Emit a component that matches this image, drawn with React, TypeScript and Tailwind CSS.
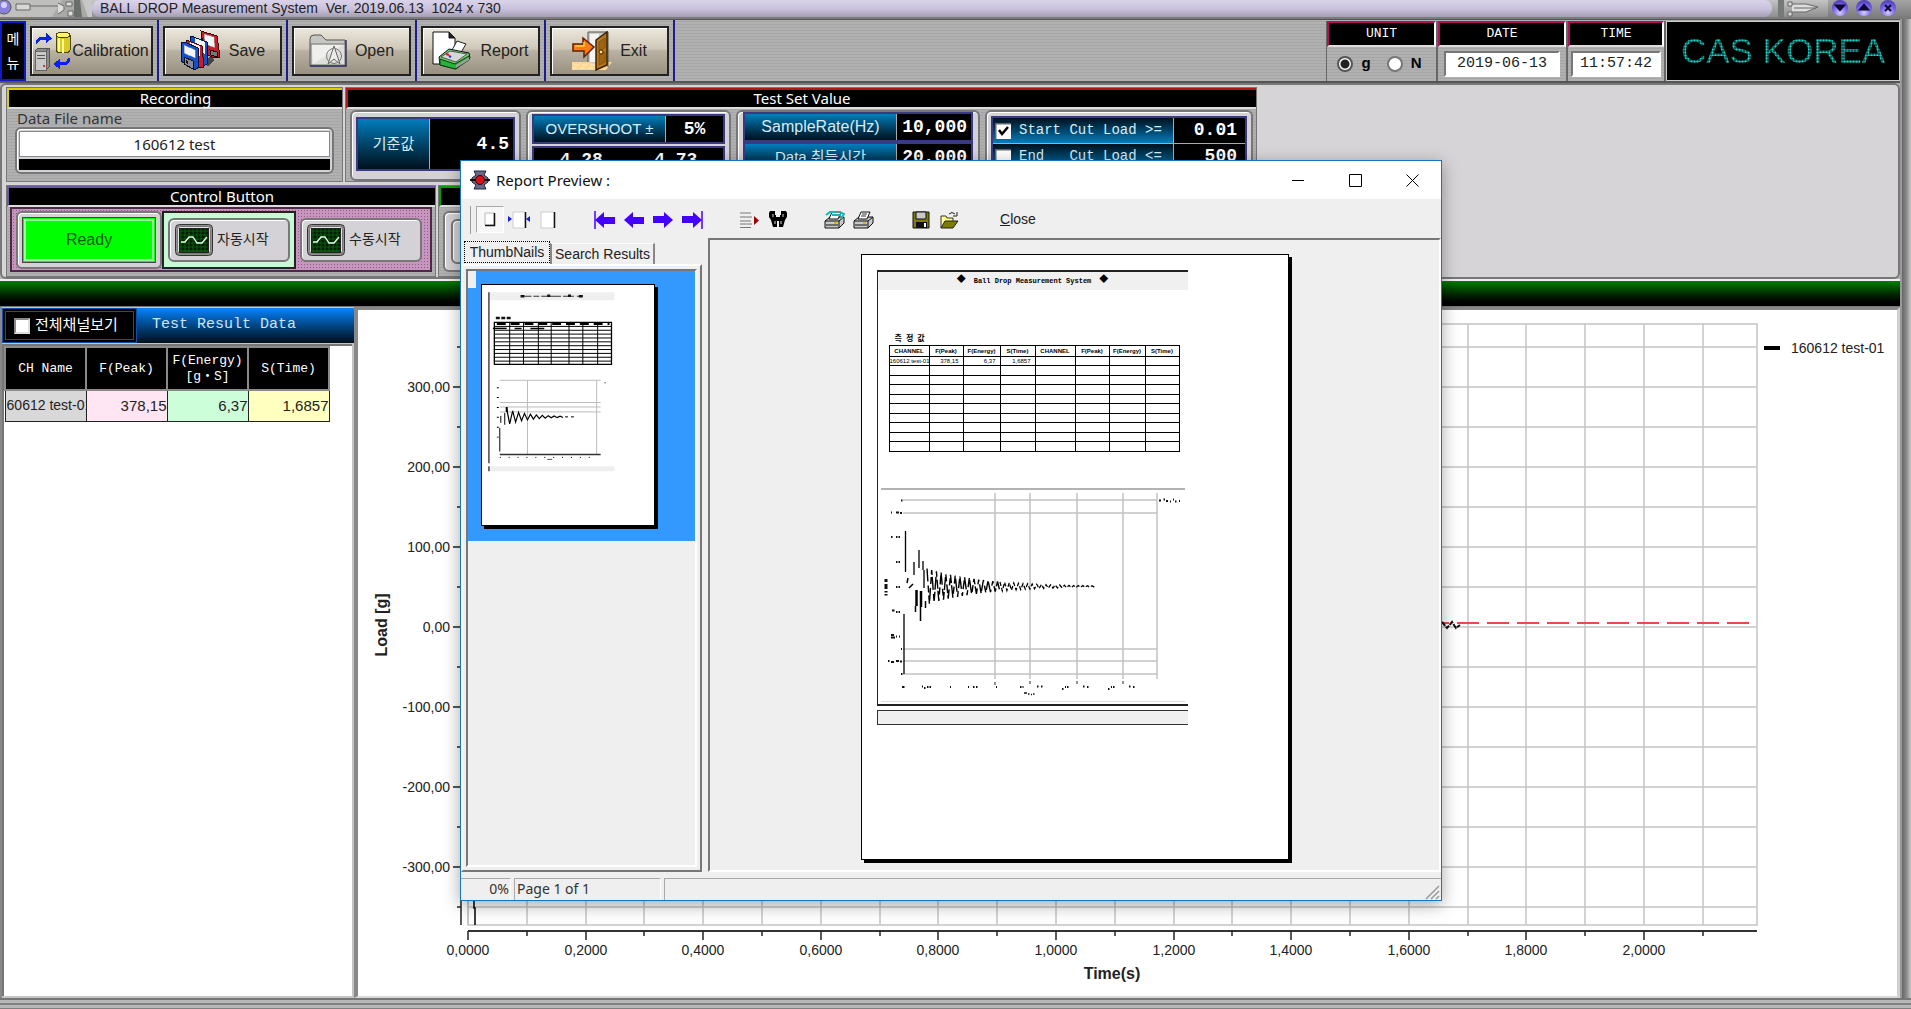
import React from 'react';

const SANS = "font-['Liberation_Sans','Noto_Sans_CJK_KR',sans-serif]";
const HUMAN = "font-['Noto_Sans','Noto_Sans_CJK_KR',sans-serif]";
const MONO = "font-['Liberation_Mono','Noto_Sans_CJK_KR',monospace]";
const BRUSHED = 'bg-[repeating-linear-gradient(0deg,#b0b0b0_0px,#b0b0b0_2px,#a6a6a6_2px,#a6a6a6_3px)]';
const BLUE = 'bg-linear-to-b from-[#007fbe] to-[#00121f]';

/* ---------- toolbar icons ---------- */

function CalibrationIcon() {
  return (
    <svg width="38" height="40" viewBox="0 0 38 40" shapeRendering="crispEdges" className="shrink-0">
      <path d="M2 13V10L5 6H12V2L18 7.500L12 12V9H6L3 13Z" fill="#0a22f0" />
      <path d="M36 27V31L32 34H26V38L19 33L26 28V31H32L34 27Z" fill="#0a22f0" />
      <path d="M22 4V19C22 23 36 23 36 19V4Z" fill="#d8cc20" stroke="#4c4800" />
      <path d="M25 7V21M29 8V22" stroke="#fff89a" strokeWidth="2" />
      <ellipse cx="29" cy="4" rx="7" ry="3" fill="#fff66a" stroke="#4c4800" />
      <path d="M1 20L4 17H15V36L12 39H1Z" fill="#8c8c8c" stroke="#555" />
      <path d="M1 20H12V39H1Z" fill="#c9c9c9" stroke="#666" />
      <path d="M12 20L15 17" stroke="#555" />
      <path d="M3 24H11M3 27H11" stroke="#555" />
      <path d="M9 35H11" stroke="#e03030" strokeWidth="2" />
    </svg>
  );
}

function SaveIcon() {
  return (
    <svg width="41" height="41" viewBox="0 0 41 41" shapeRendering="crispEdges">
      <path d="M28 36L34 30L30 26L24 33Z" fill="#444" />
      <path d="M21 1L37 6L40 27L34 28L24 23Z" fill="#c81e28" stroke="#400" />
      <path d="M24 4L34 7L35 18L25 14Z" fill="#f4f4f4" stroke="#888" strokeWidth=".6" />
      <path d="M30 20L37 22V27L31 25Z" fill="#777" stroke="#111" />
      <path d="M11 6L27 12V34L23 36L10 26Z" fill="#1450c8" stroke="#001040" />
      <path d="M15 8L25 12V24L15 18Z" fill="#f4f4f4" />
      <path d="M6 10L22 16L24 37L19 38L6 28Z" fill="#c81e28" stroke="#400" />
      <path d="M10 12L20 16V26L9 21Z" fill="#f4f4f4" />
      <path d="M1 13L5 12L18 18L19 37L15 40L1 31Z" fill="#1450c8" stroke="#001040" />
      <path d="M4 15L15 20V28L4 23Z" fill="#f4f4f4" stroke="#99a" strokeWidth=".6" />
      <path d="M4 27L13 31V39L4 34Z" fill="#889" stroke="#111" />
      <path d="M6 30L8 31V34L6 33Z" fill="#111" />
    </svg>
  );
}

function OpenIcon() {
  return (
    <svg width="38" height="33" viewBox="0 0 38 33">
      <path d="M1 31V5Q1 1 5 1H12L17 6H36V32H1Z" fill="#c6c6c2" stroke="#555" />
      <path d="M2 10H36V31H2Z" fill="#dededb" stroke="#77776f" />
      <path d="M3 11H34L4 30Z" fill="#f3f3f1" opacity=".8" />
      <path d="M1 32H37V6" stroke="#333366" strokeWidth="1.500" fill="none" />
      <circle cx="25" cy="22" r="7.500" fill="none" stroke="#777" />
      <path d="M25 12L31 30L25 25L19 30Z" fill="#ecece8" stroke="#666" />
    </svg>
  );
}

function ReportIcon() {
  return (
    <svg width="40" height="40" viewBox="0 0 40 40">
      <path d="M1 1H17L23 7V33H1Z" fill="#fff" stroke="#111" />
      <path d="M17 1V7H23Z" fill="#222" stroke="#111" />
      <path d="M20 19L25 10L34 13L28 23Z" fill="#fff" stroke="#222" />
      <path d="M7 26L17 18L37 22L38 27L24 38L8 34Z" fill="#6fd06f" stroke="#111" />
      <path d="M9 26L18 20L35 23L24 31Z" fill="#d6d8d6" stroke="#555" />
      <path d="M8 28L23 33L37 25V29L23 38L8 34Z" fill="#27b23a" stroke="#0c3c10" />
      <path d="M24 34L37 26V29L24 37Z" fill="#9aa09a" />
      <path d="M14 23L17 24" stroke="#d02020" strokeWidth="2" />
      <path d="M17 25L19 26" stroke="#2030d0" strokeWidth="2" />
    </svg>
  );
}

function ExitIcon() {
  return (
    <svg width="40" height="40" viewBox="0 0 40 40">
      <path d="M0 31H40L34 39H0Z" fill="#ffd691" />
      <path d="M2 34H34M0 37H28" stroke="#f4f0d8" strokeDasharray="5 3" />
      <path d="M16 31V1H36V36" fill="#cdc9c4" stroke="#555" />
      <path d="M18 31V3H27V31Z" fill="#f6f4f2" />
      <path d="M24 9L35 1V34L24 39Z" fill="#b5761c" stroke="#3a2200" strokeWidth="1.500" />
      <path d="M27 11L33 7V17L27 20ZM27 24L33 21V31L27 34Z" fill="#a0640f" stroke="#7c4c08" strokeWidth=".7" />
      <circle cx="29" cy="21" r="2" fill="#ffe28a" stroke="#3a2200" />
      <path d="M1 13H11V7L22 16L12 26V20H1Z" fill="#ff7a12" stroke="#5a2200" strokeWidth="1.500" />
      <path d="M3 15H12V11" stroke="#ffd24a" strokeWidth="1.500" fill="none" />
    </svg>
  );
}

function ScopeIcon() {
  const lines = [4, 8, 12, 16, 20, 24, 28];
  return (
    <svg width="38" height="32" viewBox="0 0 38 32">
      <rect x=".5" y=".5" width="37" height="31" rx="4" fill="#8f8f8f" stroke="#333" />
      <rect x="2.500" y="2.500" width="33" height="27" rx="3" fill="#e4e4e4" stroke="#777" />
      <rect x="4.500" y="4.500" width="29" height="24" fill="#011d01" stroke="#222" />
      {lines.map((v) => (
        <path key={v} d={`M${v + 2} 5V28M5 ${Math.min(v + 3, 27)}H33`} stroke="#0b6b12" strokeWidth=".8" />
      ))}
      <path d="M6 18H10L14 13H18L22 19H27L32 13" fill="none" stroke="#e8ffe8" strokeWidth="1.300" />
    </svg>
  );
}

/* ---------- frame ---------- */

function TitleBar() {
  return (
    <header className="flex h-[19px] items-stretch border-b-2 border-[#7b7b7b] bg-linear-to-b from-[#c4c4c4] to-[#8e8e8e]">
      <svg width="92" height="17" viewBox="0 0 92 17">
        <rect width="92" height="17" fill="#a9aaa8" />
        <path d="M0 0H62L52 17H0Z" fill="#bfc0be" />
        <circle cx="4" cy="7" r="7" fill="#8a7fe0" stroke="#555" />
        <circle cx="4" cy="5" r="3" fill="#d8d2ff" />
        <path d="M16 4H30V10H16ZM30 6H60" fill="#d8d8d8" stroke="#666" />
        <path d="M58 3L64 6V10L58 14M66 2H72V6H66ZM68 11H73V16H68Z" fill="#ddd" stroke="#666" />
        <path d="M74 0H80L82 17H74Z" fill="#6a6f6b" />
        <path d="M82 0H92V17H88Z" fill="#c7c7c7" />
      </svg>
      <h1 className={`${SANS} flex flex-1 items-center rounded-l-lg rounded-r-lg bg-linear-to-b from-[#d9d3ea] via-[#cbc3de] to-[#a59fb4] pb-[2px] pl-2 text-[14px] leading-none whitespace-pre text-[#222]`}>
        BALL DROP Measurement System  Ver. 2019.06.13  1024 x 730
      </h1>
      <svg width="56" height="17" viewBox="0 0 56 17">
        <path d="M6 0H12V17H6Z" fill="#747a76" />
        <path d="M16 2H20V6H16ZM16 12H20V16H16ZM20 4H34L46 7L34 12H20M22 8H44" fill="#ddd" stroke="#666" />
      </svg>
      <div className="flex w-[83px] items-center gap-2 bg-linear-to-b from-[#a5a5a5] to-[#7c7c7c] pb-[2px] pl-1">
        {[
          ['Minimize', 'M4 5.500H12L8 10Z'],
          ['Maximize', 'M4 9.500H12L8 5Z'],
          ['Close', 'M5 5L11 11M11 5L5 11'],
        ].map(([name, d]) => (
          <button key={name} type="button" aria-label={name} className="size-4 rounded-full bg-[radial-gradient(circle_at_50%_80%,#d4ccff_0%,#7a68f0_45%,#3a2a9c_100%)]">
            <svg viewBox="0 0 16 16" className="size-4">
              <path d={d} fill="#100830" stroke="#100830" strokeWidth="2" />
            </svg>
          </button>
        ))}
      </div>
    </header>
  );
}

function ToolButton({ label, icon, size = 'w-[119px] gap-2' }: { label: string; icon: React.ReactNode; size?: string }) {
  return (
    <div className="flex h-full items-center border-r-2 border-[#1c1c90] px-1">
      <button
        type="button"
        className={`${SANS} flex h-[50px] items-center justify-center border-2 border-[#222] bg-[linear-gradient(#ece8dd_0%,#cfc8b8_45%,#b9b1a1_50%,#989182_100%)] text-[16px] text-[#222] shadow-[inset_1px_1px_0_#fff] ${size}`}
      >
        {icon}
        <span>{label}</span>
      </button>
    </div>
  );
}

function InfoBlock({ title, className, children }: { title: string; className: string; children: React.ReactNode }) {
  return (
    <section className={`flex h-[60px] flex-col border-r-2 border-[#666] ${BRUSHED} ${className}`}>
      <h2 className={`${MONO} flex h-[26px] items-center justify-center border-t-2 border-r-2 border-b-2 border-l-2 border-t-[#b0105c] border-r-white border-b-[#ddd] border-l-[#b0105c] bg-black text-[13px] text-white`}>
        {title}
      </h2>
      <div className="flex flex-1 items-center justify-center">{children}</div>
    </section>
  );
}

function Toolbar() {
  return (
    <div className={`flex h-16 items-center border-t border-b-2 border-[#555] ${BRUSHED}`}>
      <div className={`${SANS} flex h-[60px] w-[26px] flex-col items-center justify-evenly border-2 border-[#0c1cc0] bg-black text-[14px] leading-4 text-white`}>
        <span>메</span>
        <span>뉴</span>
      </div>
      <ToolButton label="Calibration" icon={<CalibrationIcon />} size="w-[123px]" />
      <ToolButton label="Save" icon={<SaveIcon />} />
      <ToolButton label="Open" icon={<OpenIcon />} />
      <ToolButton label="Report" icon={<ReportIcon />} />
      <ToolButton label="Exit" icon={<ExitIcon />} />
      <div className="flex-1" />
      <InfoBlock title="UNIT" className="w-28 border-l border-l-[#666]">
        <div className={`${SANS} flex items-center gap-4 text-[15px] font-bold`}>
          <label className="flex items-center gap-2">
            <input type="radio" name="unit" defaultChecked className="size-4 appearance-none rounded-full border-2 border-[#555] bg-white bg-[radial-gradient(circle,#222_0,#222_4px,#fff_5px)]" />g
          </label>
          <label className="flex items-center gap-1">
            <input type="radio" name="unit" className="size-4 appearance-none rounded-full border-2 border-[#777] bg-white" />
            <span className="px-1">N</span>
          </label>
        </div>
      </InfoBlock>
      <InfoBlock title="DATE" className="w-[130px]">
        <input aria-label="Date" readOnly defaultValue="2019-06-13" className={`${MONO} h-[26px] w-[116px] border-2 border-t-[#777] border-r-white border-b-white border-l-[#777] bg-white text-center text-[15px] text-[#222]`} />
      </InfoBlock>
      <InfoBlock title="TIME" className="w-[98px]">
        <input aria-label="Time" readOnly defaultValue="11:57:42" className={`${MONO} h-[26px] w-[90px] border-2 border-t-[#777] border-r-white border-b-white border-l-[#777] bg-white text-center text-[15px] text-[#222]`} />
      </InfoBlock>
      <div className="flex h-[60px] w-[234px] items-center justify-center border border-[#ccc] bg-black">
        <span className={`${SANS} bg-[radial-gradient(circle,#22d3c8_0,#0f9a92_1px,#000_2px)] bg-[length:3px_3px] bg-clip-text text-[35px] leading-none text-transparent`}>
          CAS KOREA
        </span>
      </div>
    </div>
  );
}

/* ---------- settings panels ---------- */

function Panel({ title, accent, className, children }: { title?: string; accent: string; className: string; children: React.ReactNode }) {
  return (
    <section className={`flex flex-col border border-[#777] ${BRUSHED} ${className}`}>
      <h2 className={`${HUMAN} flex h-[21px] shrink-0 items-center justify-center border-t-2 border-b-2 border-l-2 border-b-[#ddd] bg-black text-[15px] leading-none text-white ${accent}`}>
        {title}
      </h2>
      {children}
    </section>
  );
}

const WELL = 'rounded-md border-2 border-[#777] bg-[#d4d2d6] shadow-[inset_1px_1px_0_#fff]';

function SetRow({ label, value, labelClass, valueClass }: { label: string; value: string; labelClass: string; valueClass: string }) {
  return (
    <div className="flex h-[30px] border-2 border-[#3a3a80] bg-black">
      <span className={`${SANS} flex items-center justify-center border-r border-[#aaa] text-[#d8ecf8] ${BLUE} ${labelClass}`}>{label}</span>
      <span className={`${MONO} flex flex-1 items-center text-[18px] font-bold text-white ${valueClass}`}>{value}</span>
    </div>
  );
}

function CutRow({ label, value, checked }: { label: string; value: string; checked?: boolean }) {
  return (
    <div className="flex h-[26px] border-b border-[#aaa]">
      <label className={`${MONO} flex w-[181px] items-center gap-2 border-r border-[#aaa] bg-linear-to-b from-[#00121f] to-[#0080c0] pl-[2px] text-[14px] whitespace-pre text-[#d8ecf8]`}>
        <input type="checkbox" defaultChecked={checked} className="peer hidden" />
        <svg width="16" height="16" viewBox="0 0 16 16">
          <rect width="16" height="16" fill="#fff" />
          <path d="M0 16V0H16" fill="none" stroke="#666" strokeWidth="3" />
          {checked && <path d="M4 7L7 11L13 4" fill="none" stroke="#000" strokeWidth="2.500" />}
        </svg>
        {label}
      </label>
      <span className={`${MONO} flex flex-1 items-center justify-end pr-2 text-[18px] font-bold text-white`}>{value}</span>
    </div>
  );
}

function TopPanel() {
  return (
    <div className="flex h-[196px] flex-col gap-[3px] rounded-md border-2 border-[#777] bg-[#d6d4d7] pt-[2px] pl-1">
      <div className="flex gap-[2px]">
        <Panel title="Recording" accent="border-t-[#d8d000] border-l-[#d8d000]" className="h-[95px] w-[337px]">
          <label htmlFor="file-name" className={`${HUMAN} pl-[10px] text-[15px] leading-[18px] text-[#333]`}>
            Data File name
          </label>
          <div className={`mx-2 flex h-[47px] flex-col gap-[2px] p-[2px] ${WELL}`}>
            <input id="file-name" defaultValue="160612 test" className={`${HUMAN} h-[26px] w-full border border-[#888] bg-white text-center text-[15px] text-[#222]`} />
            <div className="flex-1 bg-black" />
          </div>
        </Panel>
        <Panel title="Test Set Value" accent="border-t-[#b01818] border-l-[#b01818]" className="h-[95px] w-[912px]">
          <div className="flex flex-1 gap-[5px] pt-[1px] pl-1">
            <div className={`w-[171px] px-1 py-[5px] ${WELL}`}>
              <div className="flex h-[54px] border-2 border-[#3a3a80] bg-black">
                <span className={`${SANS} flex w-[72px] items-center justify-center border-r border-[#aaa] text-[15px] text-[#d8ecf8] ${BLUE}`}>기준값</span>
                <span className={`${MONO} flex flex-1 items-center justify-end pr-1 text-[18px] font-bold text-white`}>4.5</span>
              </div>
            </div>
            <div className={`flex w-[205px] flex-col gap-[2px] px-1 py-[2px] ${WELL}`}>
              <SetRow label="OVERSHOOT ±" value="5%" labelClass="w-[132px] text-[15px]" valueClass="justify-center" />
              <div className={`${MONO} flex flex-1 items-start justify-around border-2 border-[#3a3a80] bg-black text-[18px] leading-6 font-bold text-white`}>
                <span>4.28</span>
                <span>4.73</span>
              </div>
            </div>
            <div className={`flex w-[244px] flex-col px-[5px] ${WELL}`}>
              <SetRow label="SampleRate(Hz)" value="10,000" labelClass="w-[152px] text-[16px]" valueClass="justify-end pr-1" />
              <SetRow label="Data 취득시간" value="20,000" labelClass="w-[152px] text-[15px]" valueClass="justify-end pr-1" />
            </div>
            <div className={`w-[268px] px-1 py-1 ${WELL}`}>
              <div className="border-2 border-[#3a3a80] bg-black">
                <CutRow label="Start Cut Load >=" value="0.01" checked />
                <CutRow label="End   Cut Load <=" value="500" />
              </div>
            </div>
          </div>
        </Panel>
      </div>
      <div className="flex gap-[2px]">
        <Panel title="Control Button" accent="border-t-[#6a5a9c] border-l-[#6a5a9c]" className="h-[92px] w-[430px]">
          <div className="mx-[3px] mb-1 flex flex-1 items-center border-2 border-[#4a2a44] bg-[#c795be] bg-[radial-gradient(circle,#8d5f86_0,#8d5f86_1px,transparent_1px)] bg-[length:3px_3px] pl-1">
            <div className={`h-[58px] w-[146px] p-1 ${WELL}`}>
              <button type="button" className={`${SANS} h-full w-full border-[3px] border-[#444] border-double bg-[#00ff00] text-[16px] text-[#0a5a0a] outline-2 -outline-offset-4 outline-[#9dff9d]`}>
                Ready
              </button>
            </div>
            <div className="flex h-[58px] w-[134px] items-center justify-center border-2 border-[#222] bg-[#c8f8d4]">
              <button type="button" className={`${SANS} flex h-11 w-[122px] items-center gap-1 pl-[5px] text-[14px] text-[#222] ${WELL}`}>
                <ScopeIcon />
                자동시작
              </button>
            </div>
            <button type="button" className={`${SANS} ml-1 flex h-11 w-[122px] items-center gap-1 pl-[5px] text-[14px] text-[#222] ${WELL}`}>
              <ScopeIcon />
              수동시작
            </button>
          </div>
        </Panel>
        <Panel accent="border-t-[#00a000] border-l-[#00a000]" className="h-[92px] w-[819px]">
          <div className={`mx-1 my-1 flex flex-1 p-[6px] ${WELL}`}>
            <div className={`flex-1 ${WELL}`} />
          </div>
        </Panel>
      </div>
    </div>
  );
}

/* ---------- results ---------- */

function Results() {
  const th = 'border-2 border-[#8a8a8a] bg-black p-0 text-[13px] font-normal leading-4 text-white';
  const td = 'border border-[#222] p-0 text-right overflow-hidden whitespace-nowrap';
  return (
    <section className="flex w-[354px] flex-col border-l-2 border-[#888] bg-[#c4c4c4]">
      <div className="mt-[1px] flex h-[35px] bg-linear-to-b from-[#0a84ff] to-[#00101f]">
        <label className={`${SANS} flex w-[135px] items-center gap-[5px] border-4 border-double border-[#0a50b0] bg-black pl-2 text-[15px] text-white`}>
          <input type="checkbox" className="size-4 appearance-none border-2 border-[#888] border-r-[#ddd] border-b-[#ddd] bg-white" />
          <span className="whitespace-nowrap">전체채널보기</span>
        </label>
        <h2 className={`${MONO} flex items-center pl-[15px] text-[15px] text-[#cfe6ff]`}>Test Result Data</h2>
      </div>
      <div className="mt-[1px] mr-[2px] mb-[2px] flex-1 border-t-2 border-l-2 border-[#777] bg-white">
        <table className="w-[326px] table-fixed border-collapse">
          <thead>
            <tr className={`${MONO} h-[43px]`}>
              <th className={th}>CH Name</th>
              <th className={th}>F(Peak)</th>
              <th className={th}>F(Energy)<br />[g・S]</th>
              <th className={th}>S(Time)</th>
            </tr>
          </thead>
          <tbody>
            <tr className={`${SANS} h-[31px] text-[15px] text-[#222]`}>
              <td className={`${td} bg-[#d8d8d8]`}>
                <div className="flex justify-center overflow-hidden text-[14px]">160612 test-01</div>
              </td>
              <td className={`${td} bg-[#ffe6f2]`}>378,15</td>
              <td className={`${td} bg-[#ccffd9]`}>6,37</td>
              <td className={`${td} bg-[#ffffbf]`}>1,6857</td>
            </tr>
          </tbody>
        </table>
      </div>
    </section>
  );
}

function Chart() {
  const xs = Array.from({ length: 22 }, (_, i) => Math.round(468 + i * 58.8));
  const ys = Array.from({ length: 15 }, (_, i) => 347 + i * 40);
  return (
    <section className="flex-1 border-t-[3px] border-r-[3px] border-b-2 border-l-4 border-t-[#888] border-r-[#d0d0d0] border-b-[#d8d8d8] border-l-[#888] bg-white">
      <svg viewBox="358 310 1539 686" preserveAspectRatio="xMinYMin meet" className={`${SANS} block h-full w-full`}>
        <g stroke="#c4c4c4" strokeWidth="1.500" fill="none">
          {xs.map((x) => <path key={x} d={`M${x} 324V925`} />)}
          {ys.map((y) => <path key={y} d={`M468 ${y}H1757`} />)}
          <path d="M468 324H1757V925H468Z" />
        </g>
        <path d="M461 324V925" stroke="#222" strokeWidth="1.500" />
        <path d="M468 931H1757" stroke="#333" strokeWidth="2" />
        {xs.map((x, i) => <path key={x} d={`M${x} 931v${i % 2 ? 5 : 9}`} stroke="#222" strokeWidth="1.500" />)}
        {ys.map((y, i) => <path key={y} d={`M461 ${y}h${i % 2 ? -8 : -4}`} stroke="#222" strokeWidth="1.500" />)}
        <path d="M474 900V908H475V925" fill="none" stroke="#000" strokeWidth="1.500" />
        <path d="M1427 623H1755" stroke="#f04848" strokeWidth="2" strokeDasharray="22 8" />
        <path d="M1442 622L1447 628L1452 622L1456 628L1460 625" fill="none" stroke="#111" strokeWidth="2" strokeDasharray="5 1" />
        <g fontSize="14" fill="#222">
          {['300,00', '200,00', '100,00', '0,00', '-100,00', '-200,00', '-300,00'].map((t, i) => (
            <text key={t} x="450" y={392 + i * 80} textAnchor="end">{t}</text>
          ))}
          {['0,0000', '0,2000', '0,4000', '0,6000', '0,8000', '1,0000', '1,2000', '1,4000', '1,6000', '1,8000', '2,0000'].map((t, i) => (
            <text key={t} x={xs[i * 2]} y="955" textAnchor="middle">{t}</text>
          ))}
          <text x="1791" y="353">160612 test-01</text>
        </g>
        <path d="M1764 348H1780" stroke="#000" strokeWidth="4" />
        <g fontSize="16" fontWeight="bold" fill="#222">
          <text x="1112" y="979" textAnchor="middle">Time(s)</text>
          <text x="387" y="625" textAnchor="middle" transform="rotate(-90 387 625)">Load [g]</text>
        </g>
      </svg>
    </section>
  );
}

/* ---------- report preview ---------- */

function ringing(x0: number, x1: number, yc: number, amp: number, decay: number, period: number) {
  let d = '';
  for (let x = x0, i = 0; x < x1; x += period / 2, i++) {
    const a = amp * Math.exp(-(x - x0) / decay);
    d += `${i ? 'L' : 'M'}${x.toFixed(1)} ${(yc + (i % 2 ? a : -a)).toFixed(1)}`;
  }
  return d;
}

function Thumbnail() {
  return (
    <svg width="174" height="242" viewBox="481 281 174 242" className="border border-black bg-white shadow-[3px_3px_0_#000]">
      <path d="M488 288H615V296H488ZM488 464H615V469H488Z" fill="#efefef" />
      <path d="M488 288V461M488 464V469" stroke="#444" strokeWidth="1.500" />
      <path d="M524 292H580" stroke="#333" strokeWidth="1" strokeDasharray="7 2 6 2 20 2 11 3" />
      <path d="M520 292H524M579 292H583M547 291.500H550M568 291.500H571" stroke="#111" strokeWidth="2.500" />
      <path d="M495 314H510" stroke="#111" strokeWidth="2.500" strokeDasharray="4 1.500" />
      <g stroke="#000" fill="none">
        <path d="M493.500 318.500H612V361H493.500Z" strokeWidth="1.300" />
        {Array.from({ length: 10 }, (_, i) => <path key={i} d={`M493 ${322.5 + i * 3.9}H612`} />)}
        {[509, 523, 538, 551, 569, 583, 598].map((x) => <path key={x} d={`M${x} 318V361`} />)}
      </g>
      <path d="M496 320H610" stroke="#000" strokeWidth="2" strokeDasharray="9 5" />
      <path d="M492 324.500H552" stroke="#000" strokeWidth="1.500" strokeDasharray="14 8 7 9" />
      <path d="M499 377H601M499 399.500H601M499 404H601M499 409H601M527 377V452M597 377V452" stroke="#bbb" />
      <path d="M499 452H601" stroke="#333" strokeWidth="1.500" />
      <path d="M499 425V449M500 413V420M504 410V422" stroke="#000" />
      <path d="M506 404V409" stroke="#000" strokeWidth="2" />
      <path d={ringing(506, 565, 414, 8, 22, 6)} fill="none" stroke="#000" strokeWidth="1.200" />
      <path d="M565 414H575" stroke="#000" strokeDasharray="3 3" />
      <path d="M497 384V440" stroke="#000" strokeWidth="2" strokeDasharray="1 9" />
      <path d="M499 455H592M605 379.500H612" stroke="#000" strokeDasharray="1 8" />
      <path d="M547 457H552" stroke="#555" />
    </svg>
  );
}

function ReportChart() {
  return (
    <svg width="310" height="216" viewBox="878 486 310 216">
      <path d="M881 487H1185" stroke="#999" strokeWidth="1.500" />
      <path d="M881 699.500H1185" stroke="#ddd" />
      <g stroke="#c2c2c2" strokeWidth="1.500">
        {[995, 1030, 1077, 1123, 1157].map((x) => <path key={x} d={`M${x} 491V677`} />)}
        {[498, 511, 647, 659, 672].map((y) => <path key={y} d={`M903 ${y}H1157`} />)}
      </g>
      <g stroke="#000" fill="none">
        <path d="M905.500 529V570M904 612V672M914 560V573M919 548V566M923 559V568M924 568V586" strokeWidth="1.300" />
        <path d="M916.500 588V604M921 589V605" strokeWidth="2.500" />
        <path d="M915.500 604V610M920.500 605V619M925.500 599V606M908 576L907 581M909 586L913 582" strokeWidth="1.500" />
        <path d={ringing(927, 1000, 584.5, 18, 55, 4.7)} strokeWidth="1.400" strokeDasharray="13 4 7 3 9 2" />
        <path d={ringing(1000, 1095, 584.5, 4.5, 50, 4.6)} strokeWidth="1.300" strokeDasharray="4 2" />
      </g>
      <g stroke="#111" strokeWidth="2">
        <path d="M891 510.500h1M896 510.500h3M900 511h2M891 535h1.500M896 535h1.500M898.500 535h1.500M896 560h1.500M898.500 560h1.500M896 585h1.500M898.500 585h1.500M892 608.500h2.500M896 610h1.500M898.500 610h1.500M891 633h3M891 635.500h4M896 634.500h1M899 634.500h1M888 659h1.500M891 660h3M896 659h3M900 659.500h2M901 498.500h1.500M901 672h1.500M901 647h1" />
        <path d="M902 685h2.500M922 684.500h1M924 686h1.500M927 685h1.500M929.500 685h1.500M950 685h1M968 685h1M973 685h1.500M976 685h1.500M996 685h1M1020 685h1.500M1022.500 685h1M1037 684.500h1.500M1041 684.500h1.500M1062 687h1.500M1065 685h1M1067 685h1.500M1083 684.500h1.500M1087 685h1.500M1108 687h1.500M1111 685h1M1113 685h1.500M1129 684.500h1.500M1133 685h1.500" />
        <path d="M1159 498.500h2M1163.500 497.500h1.500M1166 499h2M1170 499.500h1M1173 497.500h1M1175 499.500h1.500M1179 499h1" />
        <path d="M886 577v3M886 582v5M886 589v1.500M886 592v1.500" strokeWidth="3" />
        <path d="M1024 691h3M1028 692h1.500M1031 692.500h1M1033 692h1.500" strokeWidth="1.500" />
      </g>
      <path d="M995 680V683M1030 679V682M1077 679V682M1123 679V682" stroke="#222" />
    </svg>
  );
}

const REPORT_COLS: [string, string, string][] = [
  ['CHANNEL', 'w-10', '160612 test-01'],
  ['F(Peak)', 'w-[34px]', '378,15'],
  ['F(Energy)', 'w-[37px]', '6,37'],
  ['S(Time)', 'w-[35px]', '1,6857'],
  ['CHANNEL', 'w-10', ''],
  ['F(Peak)', 'w-[34px]', ''],
  ['F(Energy)', 'w-9', ''],
  ['S(Time)', 'w-[34px]', ''],
];

function ReportPage() {
  const cell = 'overflow-hidden border border-black p-0 whitespace-nowrap';
  return (
    <article className="flex h-[606px] w-[428px] flex-col border border-black bg-white pt-[15px] pl-[15px] shadow-[3px_3px_0_#000]">
      <div className="h-[436px] w-[311px] border-t-2 border-b-2 border-l border-[#222]">
        <h3 className={`${MONO} flex h-[18px] items-center justify-center gap-2 bg-[#f0f0f0] text-[7px] font-bold text-black`}>
          <span className="text-[9px]">◆</span>
          <span>Ball Drop Measurement System</span>
          <span className="text-[9px]">◆</span>
        </h3>
        <p className={`${SANS} mt-[43px] flex gap-1 pl-[17px] text-[8px] leading-3 font-bold`}>
          <span>측</span>
          <span>정</span>
          <span>값</span>
        </p>
        <table className={`${SANS} ml-[11px] w-[291px] table-fixed border-collapse text-[6px] leading-[7px] text-black`}>
          <thead>
            <tr className="h-[11px]">
              {REPORT_COLS.map(([name, width], i) => (
                <th key={i} className={`${cell} ${width}`}>{name}</th>
              ))}
            </tr>
          </thead>
          <tbody>
            {Array.from({ length: 10 }, (_, r) => (
              <tr key={r} className={r % 2 ? 'h-[10px]' : 'h-[9px]'}>
                {REPORT_COLS.map(([, , v], i) => (
                  <td key={i} className={`${cell} ${i ? 'pr-1 text-right' : ''}`}>{r === 0 ? v : ''}</td>
                ))}
              </tr>
            ))}
          </tbody>
        </table>
        <div className="mt-[36px]">
          <ReportChart />
        </div>
      </div>
      <div className="mt-1 h-[15px] w-[311px] border-t border-b border-l border-[#333] bg-[#f0f0f0]" />
    </article>
  );
}

function IconButton({ label, children }: { label: string; children: React.ReactNode }) {
  return (
    <button type="button" aria-label={label} className="flex h-[26px] w-[29px] items-center justify-center">
      {children}
    </button>
  );
}

function Arrow({ bar, right }: { bar?: boolean; right?: boolean }) {
  return (
    <svg width="22" height="18" viewBox="0 0 22 18" className={right ? 'rotate-180' : ''}>
      <path d="M1 9L10 1V6H21V13H10V17Z" fill="#4400ff" />
      {bar && <path d="M1 0V18" stroke="#4400ff" strokeWidth="1.500" />}
    </svg>
  );
}

function Printer({ many }: { many?: boolean }) {
  return (
    <svg width="21" height="18" viewBox="0 0 21 18">
      <path d="M1 10L6 6H20V12L15 17H1Z" fill="#c9c9c9" stroke="#111" />
      <path d="M1 10H15V17M15 10L20 6M2 14H14" fill="none" stroke="#111" />
      <path d="M8 1H17L14 8H5Z" fill="#fff" stroke="#111" />
      {many ? <path d="M2 4L6 1H12M8 4H17M15 1L20 3L17 8" fill="none" stroke="#12b8c0" strokeWidth="2" /> : <path d="M9 3H14M8 5H13" stroke="#333" />}
      <path d="M10 12H13" stroke="#d0c000" strokeWidth="2" />
    </svg>
  );
}

function ReportToolbar() {
  return (
    <div className={`${SANS} flex h-[39px] items-center pt-[2px] pl-[9px]`}>
      <div className="mr-[5px] h-7 border-l border-[#999]" />
      <button type="button" aria-label="Whole page" className="flex h-[27px] w-7 items-center justify-center border border-t-[#aaa] border-r-white border-b-white border-l-[#aaa] bg-[#f7f7f7]">
        <svg width="12" height="15" viewBox="0 0 12 15"><path d="M1 1H10V13H1Z" fill="#fff" stroke="#bbb" /><path d="M10.500 1V13.500H1" fill="none" stroke="#111" strokeWidth="1.500" /></svg>
      </button>
      <IconButton label="Page width">
        <svg width="22" height="18" viewBox="0 0 22 18"><path d="M5 1H17V17H5Z" fill="#fff" stroke="#ccc" /><path d="M17.500 1V17" stroke="#111" strokeWidth="1.500" /><path d="M0 5V11L4 8ZM22 5V11L18 8Z" fill="#1520e0" /></svg>
      </IconButton>
      <IconButton label="Actual size">
        <svg width="16" height="18" viewBox="0 0 16 18"><path d="M1 1H14V17H1Z" fill="#fff" stroke="#ccc" /><path d="M14.500 1V17" stroke="#111" strokeWidth="1.500" /></svg>
      </IconButton>
      <div className="w-7" />
      <IconButton label="First page"><Arrow bar /></IconButton>
      <IconButton label="Previous page"><Arrow /></IconButton>
      <IconButton label="Next page"><Arrow right /></IconButton>
      <IconButton label="Last page"><Arrow bar right /></IconButton>
      <div className="w-7" />
      <IconButton label="Go to page">
        <svg width="20" height="18" viewBox="0 0 20 18"><path d="M1 2H12M1 6H13M1 10H12M1 13H13M1 16.500H12" stroke="#777" /><path d="M15 5V14L20 9.500Z" fill="#a00000" /></svg>
      </IconButton>
      <IconButton label="Search text">
        <svg width="18" height="17" viewBox="0 0 18 17"><path d="M1 0H6V4H7V6H11V4H12V0H17L18 2V6L16 9L14 16H10V10H8V16H4L2 9L0 6V2Z" fill="#000" /><path d="M4 3V6M14 3V6M6 10V13M12 10V13" stroke="#ddd" /></svg>
      </IconButton>
      <div className="w-7" />
      <IconButton label="Printer setup"><Printer many /></IconButton>
      <IconButton label="Print"><Printer /></IconButton>
      <div className="w-7" />
      <IconButton label="Save report">
        <svg width="18" height="18" viewBox="0 0 18 18"><path d="M1 1H17V17H1Z" fill="#7c7c00" stroke="#111" /><path d="M4 1H14V8H4Z" fill="#c8c8c8" stroke="#111" /><path d="M4 11H15V17H4Z" fill="#111" /><path d="M12 12H14V16H12Z" fill="#fff" /></svg>
      </IconButton>
      <IconButton label="Load report">
        <svg width="19" height="18" viewBox="0 0 19 18"><path d="M1 17V5H6L7 7H13V10" fill="#ffff8c" stroke="#333" /><path d="M1 17L5 10H18L13 17Z" fill="#7c7c00" stroke="#222" /><path d="M9 3Q12 0 15 3M17 1V5H13" fill="none" stroke="#222" /></svg>
      </IconButton>
      <button type="button" className="ml-7 px-2 text-[14px] text-[#222]">
        <span className="underline">C</span>lose
      </button>
    </div>
  );
}

function ReportDialog() {
  return (
    <div role="dialog" aria-label="Report Preview" className="absolute top-[160px] left-[460px] flex h-[741px] w-[982px] flex-col border border-[#1874bc] bg-[#efefef] shadow-[0_4px_16px_rgba(0,0,0,0.35)]">
      <div className="flex h-[38px] items-center bg-white pl-[9px]">
        <svg width="20" height="20" viewBox="0 0 20 20">
          <path d="M4 1H16L14 5L18 8V12L14 15L16 19H4L6 15L2 12V8L6 5Z" fill="#66688c" stroke="#22223a" />
          <path d="M0 10H20" stroke="#111" strokeWidth="2" />
          <circle cx="10" cy="10" r="4.500" fill="#d81018" stroke="#400" />
        </svg>
        <h2 className={`${HUMAN} flex-1 pl-[6px] text-[15px] text-[#111]`}>Report Preview :</h2>
        <div className="flex">
          {[
            ['Minimize window', 'M0 6.500H12'],
            ['Maximize window', 'M.5 .5H12.500V12.500H.5Z'],
            ['Close window', 'M.5 .5L12.500 12.500M12.500 .5L.5 12.500'],
          ].map(([name, d]) => (
            <button key={name} type="button" aria-label={name} className="flex h-[37px] w-[57px] items-center justify-center">
              <svg width="13" height="13" viewBox="0 0 13 13"><path d={d} fill="none" stroke="#000" /></svg>
            </button>
          ))}
        </div>
      </div>
      <ReportToolbar />
      <div className="flex min-h-0 flex-1">
        <div className="flex w-[241px] flex-col pt-[3px]">
          <div role="tablist" className={`${SANS} flex h-[23px] items-end pl-[3px] text-[14px] text-[#222]`}>
            <button type="button" role="tab" aria-selected="true" className="mb-[1px] h-[22px] w-[86px] border border-dotted border-black leading-none">
              ThumbNails
            </button>
            <button type="button" role="tab" aria-selected="false" className="h-[21px] w-[105px] border-r-2 border-l-2 border-t border-t-white border-[#888] leading-none whitespace-nowrap">
              Search Results
            </button>
          </div>
          <div className="mb-[6px] flex min-h-0 flex-1 border-2 border-t-white border-r-[#777] border-b-[#777] border-l-white p-[3px]">
            <div className="flex-1 border-2 border-t-[#777] border-r-white border-b-white border-l-[#777]">
              <div className="flex h-[270px] bg-[#3399ff] pt-[13px]">
                <span className="-mt-[13px] mr-[5px] h-[17px] w-2 bg-[#efefef]" />
                <Thumbnail />
              </div>
            </div>
          </div>
        </div>
        <div className="mb-[6px] ml-[6px] min-h-0 flex-1 overflow-hidden border-2 border-t-[#777] border-r-white border-b-white border-l-[#777]">
          <div className="flex justify-center pt-[14px]">
            <ReportPage />
          </div>
        </div>
      </div>
      <footer className={`${HUMAN} flex h-[22px] gap-[3px] text-[14px] leading-5 text-[#333]`}>
        <span className="w-[50px] border-t border-r border-t-[#aaa] border-r-white pr-[1px] text-right">0%</span>
        <span className="w-[147px] border-t border-r border-l border-t-[#aaa] border-r-white border-l-[#aaa] pl-[2px]">Page 1 of 1</span>
        <span className="flex flex-1 items-end justify-end border-t border-l border-[#aaa]">
          <svg width="16" height="16" viewBox="0 0 16 16"><path d="M1 15L14 2M6 15L14 7M11 15L14 12" stroke="#999" strokeWidth="1.500" /></svg>
        </span>
      </footer>
    </div>
  );
}

export default function App() {
  return (
    <div className="relative flex h-screen flex-col overflow-hidden bg-[#b0b0b0]">
      <TitleBar />
      <div className="flex min-h-0 flex-1">
        <main className="flex min-w-0 flex-1 flex-col">
          <Toolbar />
          <TopPanel />
          <div className="h-[27px] border-t-2 border-[#eee] bg-linear-to-b from-[#008000] to-black" />
          <div className="flex min-h-0 flex-1 border-t border-[#777]">
            <Results />
            <Chart />
          </div>
        </main>
        <div className="w-[11px] border-l-2 border-[#999] bg-linear-to-r from-[#666] via-[#8a8a8a] to-[#c8c8c8]" />
      </div>
      <div className="h-[11px] border-t-2 border-[#777] bg-[repeating-linear-gradient(180deg,#b8b8b8_0px,#b8b8b8_3px,#808080_3px,#808080_5px)]" />
      <ReportDialog />
    </div>
  );
}
